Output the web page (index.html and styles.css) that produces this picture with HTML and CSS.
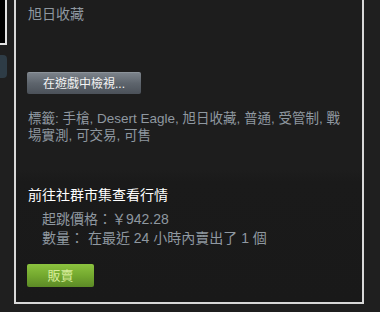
FILE: index.html
```html
<!DOCTYPE html>
<html lang="zh-Hant">
<head>
<meta charset="utf-8">
<link rel="stylesheet" href="styles.css">
</head>
<body>
<div class="page">
  <div class="side">
    <div class="side-box"></div>
    <div class="side-tab"></div>
  </div>
  <div class="frame">
    <div class="upper">
      <div class="collection">旭日收藏</div>
      <button class="btn-view">在遊戲中檢視...</button>
      <div class="tags">標籤: 手槍, Desert Eagle, 旭日收藏, 普通, 受管制, 戰場實測, 可交易, 可售</div>
    </div>
    <div class="lower">
      <div class="market-title">前往社群市集查看行情</div>
      <div class="market-info">
        <div class="info-line">起跳價格：￥942.28</div>
        <div class="info-line">數量： 在最近 24 小時內賣出了 1 個</div>
      </div>
      <button class="btn-sell">販賣</button>
    </div>
  </div>
</div>
</body>
</html>
```
FILE: styles.css
```css
html, body {
  margin: 0;
  padding: 0;
  background: #1f1f1f;
  height: 312px;
  overflow: hidden;
}
body {
  font-family: "Liberation Sans", Arial, "Noto Sans CJK TC", sans-serif;
}
.page {
  display: flex;
  align-items: flex-start;
  gap: 7px;
}
.side {
  width: 7px;
  display: flex;
  flex-direction: column;
  gap: 10px;
}
.side-box {
  background: #000;
  border-right: 2px solid #e2e2e2;
  border-bottom: 2px solid #e2e2e2;
  box-sizing: border-box;
  height: 45px;
}
.side-tab {
  height: 23px;
  background: #2e3c46;
  border-radius: 0 4px 4px 0;
}
.frame {
  width: 350px;
  box-sizing: border-box;
  border: 2px solid #d8d8d8;
  border-top: none;
  background: #1d1d1d;
}
.upper {
  padding: 5px 12px 26px 12px;
}
.collection {
  font-size: 14px;
  line-height: 18px;
  color: #8f98a0;
}
.btn-view {
  display: block;
  margin-top: 49px;
  height: 22px;
  width: 114px;
  padding: 0;
  margin-left: -1px;
  border: none;
  border-top: 1px solid #8c939a;
  border-radius: 2px;
  background: linear-gradient(to bottom, #7b828a 0%, #5d646c 50%, #4b5159 100%);
  color: #f4f4f4;
  font-family: "Liberation Sans", Arial, "Noto Sans CJK TC", sans-serif;
  font-size: 12px;
  line-height: 20px;
  text-align: center;
}
.tags {
  margin-top: 16px;
  font-size: 13.5px;
  line-height: 17px;
  color: #8f98a0;
}
.lower {
  padding: 16px 12px 15px 12px;
  background: linear-gradient(to bottom, #1d1d1d 0px, #1a1a1a 12px, #191919 100%);
}
.market-title {
  font-size: 14px;
  line-height: 18px;
  color: #ffffff;
}
.market-info {
  margin-top: 6px;
  padding-left: 14px;
}
.info-line {
  font-size: 14px;
  line-height: 19px;
  color: #8f98a0;
}
.btn-sell {
  display: block;
  margin-top: 16px;
  margin-left: -1px;
  width: 67px;
  height: 23px;
  padding: 0;
  border: none;
  border-radius: 2px;
  background: linear-gradient(to bottom, #8cc33f 0%, #74a92f 50%, #5c8a26 100%);
  color: #d6ec9a;
  font-family: "Liberation Sans", Arial, "Noto Sans CJK TC", sans-serif;
  font-size: 13px;
  line-height: 23px;
  text-align: center;
}
```
